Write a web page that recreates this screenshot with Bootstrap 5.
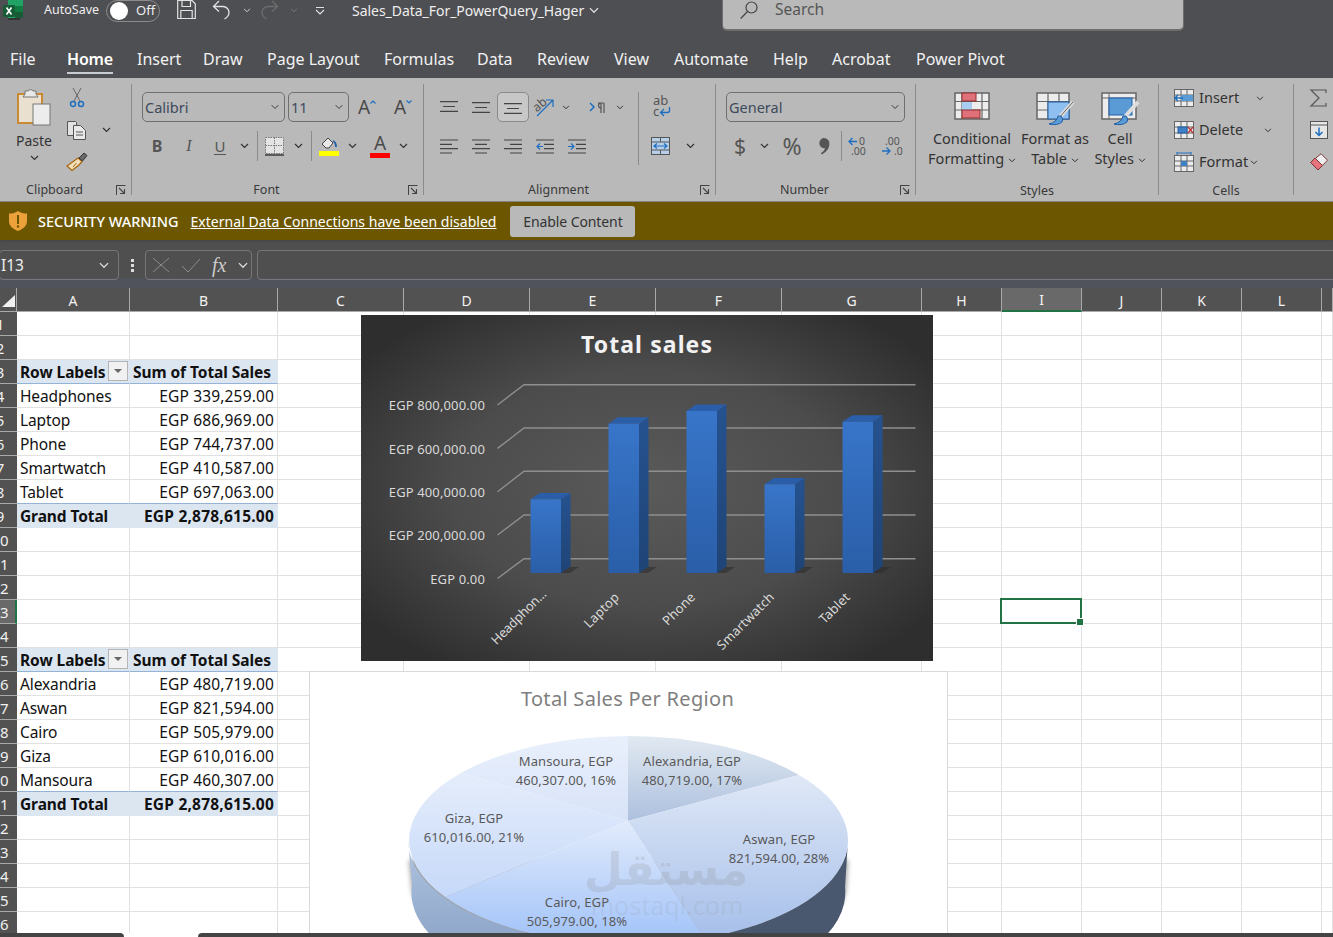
<!DOCTYPE html>
<html lang="en">
<head>
<meta charset="utf-8">
<title>Sales_Data_For_PowerQuery_Hager - Excel</title>
<link href="https://cdn.jsdelivr.net/npm/bootstrap@5.3.0/dist/css/bootstrap.min.css" rel="stylesheet">
<style>
html,body{margin:0;height:937px;overflow:hidden;background:#fff}
body{font-family:"Noto Sans","Open Sans","Liberation Sans",sans-serif;color:#333}
svg{display:block;flex-shrink:0;overflow:visible}
.app{width:1333px;height:937px;overflow:hidden}
.titlebar{height:46px;background:#4e4f53;color:#eee}
.logo{margin-left:3px;width:20px;height:21px;align-self:flex-start}
.autosave{font-size:12.5px;margin-left:21px;width:62px;margin-bottom:25px}
.toggle{width:54px;height:22px;border:1px solid #8b8b8b;border-radius:11px;font-size:13px;padding-left:3px;gap:8px;margin-bottom:25px}
.knob{width:18px;height:18px;border-radius:50%;background:#fff}
.qat{height:21px;margin-bottom:25px}
.q1{margin-left:17px;width:35px}.q2{width:31px}.q3{width:17px}.q4{width:30px}.q5{width:25px}.q6{width:26px}.q7{width:11px}
.doc{font-size:14px;width:237px;white-space:nowrap;margin-bottom:25px;letter-spacing:-.04px}
.searchbox{margin-left:134px;width:460px;height:30px;margin-top:-1px;padding-bottom:8px;align-self:flex-start;background:#b9b9b9;border-radius:0 0 4px 4px;box-shadow:0 1px 0 1px #6d6d6d;color:#555;font-size:15.5px;padding-left:17px;gap:17px}
.tabs{height:32px;background:#4e4f53;flex-wrap:nowrap}
.tabs .nav-link{color:#f2f2f2;font-size:16px;padding:0;line-height:26px;height:28px;white-space:nowrap;display:inline-block}
.tabs .nav-item{flex-shrink:0}
.tabs .nav-item:nth-child(1){margin-left:10px;width:57px}
.tabs .nav-item:nth-child(2){width:70px}
.tabs .nav-item:nth-child(3){width:66px}
.tabs .nav-item:nth-child(4){width:64px}
.tabs .nav-item:nth-child(5){width:117px}
.tabs .nav-item:nth-child(6){width:93px}
.tabs .nav-item:nth-child(7){width:60px}
.tabs .nav-item:nth-child(8){width:77px}
.tabs .nav-item:nth-child(9){width:60px}
.tabs .nav-item:nth-child(10){width:99px}
.tabs .nav-item:nth-child(11){width:59px}
.tabs .nav-item:nth-child(12){width:84px}
.tabs .active{font-weight:600;border-bottom:2px solid #c8cad4;color:#fff;letter-spacing:-.2px}
.ribbon{height:124px;background:#b9b9b9;padding-top:6px;border-bottom:1px solid #8a8a8a}
.g{height:111px;border-right:1px solid #8c8c8c;flex-shrink:0}
.g-clip{width:132px}.g-font{width:292px}.g-align{width:292px}.g-num{width:200px}.g-styles{width:243px}.g-cells{width:135px}.g-edit{width:39px;border:0}
.gb{height:97px;display:flow-root}
.gl{height:16px;font-size:12.5px;line-height:14px;color:#3a3a3a;padding-top:2px}
.gl2{padding-top:3px}
.launch{width:22px;padding:2px 5px 0 7px}
.s{display:flex;align-items:center;justify-content:center;flex-shrink:0;height:100%}
.rw{height:30px}
.r1{margin-top:8px}.r2{margin-top:9px}
.sep{width:1px;background:#8c8c8c;flex-shrink:0}
.sep-s{height:30px}
.w3{width:3px}.w4{width:4px}.w5{width:5px}.w6{width:6px}.w9{width:9px}.w10{width:10px}.w14{width:14px}.w15{width:15px}.w16{width:16px}.w18{width:18px}.w20{width:20px}.w28{width:28px}.w30{width:30px}.w32{width:32px}.w33{width:33px}.w36{width:36px}.w40{width:40px}.w42{width:42px}.w45{width:45px}.w46{width:46px}.w68{width:68px}
.form-select.fs{height:30px;min-height:30px;padding:0 16px 0 2px;font-size:14.5px;line-height:28px;color:#3d4a5c;background-color:transparent;border:1px solid #6f6f6f;border-radius:5px;background-position:right 4px center;background-size:10px 8px;flex-shrink:0;box-shadow:none}
.f-font{width:143px;margin-left:10px}.f-size{width:61px;margin-left:3px}.f-num{width:179px;margin-left:10px}
.gA{font-size:19px;color:#4a4a4a;line-height:1}
.gB{font-size:16px;color:#555;font-weight:700}
.gI{font-size:16px;color:#555;font-style:italic;font-family:"Liberation Serif",serif}
.gU{font-size:15px;color:#555;border-bottom:1.5px solid #555;line-height:16px;padding:0 1px}
.gC{font-size:21px;color:#555;line-height:1}
.gP{font-size:23px;color:#555;line-height:1}
.sel-btn{border:1px solid #8a8a8a;border-radius:5px;background:#c7c7c7;height:30px}
.paste{font-size:14px;line-height:20px;margin-top:5px}
.paste-col{height:97px;padding-top:4px}
.crow{height:28px;margin-bottom:4px}
.big{font-size:14.5px;line-height:20px;text-align:center;white-space:nowrap}
.bigcol{padding-top:8px}
.bigicon{height:36px}
.c-1{width:96px}.c-2{width:70px}.c-3{width:60px}
.lead8{margin-left:8px}
.cellrow{font-size:14.5px;padding-left:15px}
.cw25{width:25px}.cw56{width:56px}.cw64{width:64px}.cw50{width:50px}
.editrow{padding-left:16px}
.warn{height:38px;background:#6c5700;color:#fff;font-size:14px;padding-left:9px;box-shadow:0 1px 2px #444;position:relative}
.warn b{font-weight:500;margin-left:11px;font-size:14.5px;letter-spacing:0;padding-top:1px}
.warn a{color:#fff;margin-left:12px;letter-spacing:.02px}
.warn .btn{margin-left:14px;background:#b9b9b9;color:#333;border:0;border-radius:3px;font-size:14px;height:31px;width:125px;padding:0;letter-spacing:-.1px}
.fbar{height:48px;background:#4f4f4f;padding-top:10px;align-items:flex-start;background-image:linear-gradient(#4f4f4f 38px,#50535c 38px)}
.namebox{width:120px;height:30px;margin-left:-1px;border:1px solid #777;border-radius:4px;color:#eee;font-size:15.5px;padding:1px 0 0 1px;flex-shrink:0}
.dots{width:26px;height:30px;color:#ddd;flex-shrink:0}
.fxbox{width:107px;height:30px;border:1px solid #777;border-radius:4px;flex-shrink:0;color:#8b8b8b}
.fx{font-family:"Liberation Serif",serif;font-style:italic;font-size:20px;color:#ccc;line-height:1;width:19px}
.ml6{margin-left:6px}.ml11{margin-left:11px}
.finput{width:1090px;height:30px;border:1px solid #777;border-radius:4px;margin-left:5px;flex-shrink:0}
.sheetwrap{height:645px;overflow:hidden;position:relative}
table.sheet{table-layout:fixed;width:1333px;border-collapse:separate;border-spacing:0;margin:0;color:#111}
.sheet col.h{width:17px}.sheet col.a{width:113px}.sheet col.b{width:148px}.sheet col.c{width:126px}.sheet col.g7{width:140px}.sheet col.n{width:80px}.sheet col.m{width:11px}
.sheet thead th{height:24px;background:#525252;color:#f2f2f2;font-weight:400;font-size:14px;text-align:center;padding:2px 0 0;border-right:1px solid #a9a9a9;border-bottom:1px solid #a9a9a9;line-height:21px}
.sheet thead th.on{background:#696969;border-bottom:2px solid #217346;line-height:20px}
.sheet thead th.cor{position:relative;padding:0}
.sheet tbody th{height:24px;background:#525252;color:#f0f0f0;font-weight:400;font-size:15px;padding:2px 0 0;overflow:hidden;border-bottom:1px solid #a9a9a9;line-height:21px}
.sheet tbody th span{display:block;width:34px;margin-left:-17px;text-align:center}
.sheet tbody th.on{background:#696969;border-right:2px solid #217346}
.sheet td{height:24px;padding:2px 3px 0;border-right:1px solid #e1e1e1;border-bottom:1px solid #e1e1e1;font-size:15.5px;line-height:21px;white-space:nowrap;overflow:hidden;letter-spacing:-.12px}
.sheet td.v{text-align:right;letter-spacing:.15px}
.sheet td.hd{background:#dce6f1;font-weight:700;border-color:#dce6f1;border-bottom-color:#95b3d7;letter-spacing:-.07px}
.sheet td.tot{background:#dce6f1;font-weight:700;border-color:#dce6f1;letter-spacing:-.1px}
.sheet td.tot.v{letter-spacing:.22px}
.sheet tr.pre td.lb{border-bottom-color:#95b3d7}
.sheet td.hd.a1{position:relative;overflow:visible}
.filter{width:20px;height:20px;border:1px solid #b5b5b5;background:#f1f1f1;position:absolute;right:1px;top:1px;display:flex;align-items:center;justify-content:center}
.sheet td.cur{position:relative;overflow:visible}
.selbox{position:absolute;top:-2px;left:-2px;right:-1px;bottom:-1px;border:2px solid #217346;z-index:1}
.selbox i{position:absolute;right:-4px;bottom:-4px;width:6px;height:6px;background:#217346;border:1px solid #fff;box-sizing:content-box}
.chart{position:absolute;z-index:2}
.chart1{left:361px;top:27px;width:572px;height:346px;background:radial-gradient(ellipse 62% 62% at 50% 50%,#5a5a5a 0%,#4c4c4c 55%,#2e2e2e 100%)}
.chart2{left:310px;top:384px;width:637px;height:262px;background:#fff;box-shadow:0 0 0 1px #d9d9d9}
.chart text{font-family:"Noto Sans","Open Sans",sans-serif}
.t1{font-size:23px;font-weight:700;fill:#f2f2f2;letter-spacing:1.1px}
.ax{font-size:13px;fill:#d9d9d9;letter-spacing:.13px}
.ax .hp{letter-spacing:-.3px}
.t2{font-size:20px;fill:#7f7f7f;letter-spacing:.3px}
.pl{font-size:13px;fill:#595959;letter-spacing:.1px}
.bottom{height:4px;background:#fff}
.bot1{width:124px;height:4px;background:#444;border-radius:0 4px 0 0}
.bot2{width:1135px;height:4px;margin-left:74px;background:#444;border-radius:4px 0 0 0}
</style>
</head>
<body>
<svg width="0" height="0" class="position-absolute">
  <symbol id="ch" viewBox="0 0 9 6"><path d="M1 1l3.5 3.5L8 1" fill="none" stroke="#333" stroke-width="1.2"/></symbol>
  <symbol id="chw" viewBox="0 0 9 6"><path d="M1 1l3.5 3.5L8 1" fill="none" stroke="#ddd" stroke-width="1.1"/></symbol>
  <symbol id="la" viewBox="0 0 10 10"><path d="M0 .5h9.5M.5 0v10M.5 .5" stroke="#444" fill="none"/><path d="M3 3l5.5 5.5M4 8.5h4.5V4" stroke="#444" fill="none" stroke-width="1.1"/></symbol>
</svg>
<div class="app">
  <div class="titlebar d-flex align-items-center">
    <svg class="logo" viewBox="0 0 20 21"><rect x="5" y="0" width="15" height="18" fill="#21a366"/><rect x="12" y="6" width="8" height="6" fill="#107c41"/><rect x="12" y="12" width="8" height="6" fill="#185c37"/><rect x="0" y="5" width="12" height="12" rx="1" fill="#185c37"/><path d="M3.5 7.5l5 7M8.5 7.5l-5 7" stroke="#fff" stroke-width="1.6"/><rect x="5" y="18" width="12" height="2" fill="#333"/></svg>
    <div class="autosave">AutoSave</div>
    <div class="toggle d-flex align-items-center"><span class="knob"></span><span>Off</span></div>
    <div class="qat q1 d-flex"><svg width="19" height="19" viewBox="0 0 19 19"><path d="M.7.5v18h17.6V3.8L15 .5zM5 .5v6h8.500v-6M3.800 18.500v-8h11.400v8" fill="none" stroke="#e2e2e2" stroke-width="1.2"/></svg></div>
    <div class="qat q2 d-flex"><svg width="19" height="20" viewBox="0 0 19 20"><path d="M7 1L1.5 6.5 7 11.5M1.5 6.5H11a6 6 0 0 1 6 6c0 3-2 5-4.500 6.500" fill="none" stroke="#e2e2e2" stroke-width="1.3"/></svg></div>
    <div class="qat q3 d-flex align-items-center"><svg width="8" height="5"><use href="#chw"/></svg></div>
    <div class="qat q4 d-flex"><svg width="19" height="20" viewBox="0 0 19 20"><path d="M12 1l5.500 5.500L12 11.500M17.500 6.500H8a6 6 0 0 0-6 6c0 3 2 5 4.500 6.500" fill="none" stroke="#6d6d6d" stroke-width="1.3"/></svg></div>
    <div class="qat q5 d-flex align-items-center"><svg width="8" height="5" opacity=".35"><use href="#chw"/></svg></div>
    <div class="qat q6 d-flex align-items-center"><svg width="10" height="8" viewBox="0 0 10 8"><path d="M1 .5h8M1 3l4 4 4-4" fill="none" stroke="#e2e2e2" stroke-width="1.1"/></svg></div>
    <div class="qat q7"></div>
    <div class="doc d-flex align-items-center gap-1">Sales_Data_For_PowerQuery_Hager<svg width="12" height="7" viewBox="0 0 9 6"><use href="#chw"/></svg></div>
    <div class="searchbox d-flex align-items-center"><svg width="18" height="18" viewBox="0 0 18 18"><circle cx="11.500" cy="6.500" r="5.500" fill="none" stroke="#444" stroke-width="1.200"/><path d="M7.500 10.500L.7 17.500" stroke="#444" stroke-width="1.200"/></svg><span>Search</span></div>
  </div>
  <ul class="nav tabs">
    <li class="nav-item"><a class="nav-link" href="#">File</a></li>
    <li class="nav-item"><a class="nav-link active" href="#">Home</a></li>
    <li class="nav-item"><a class="nav-link" href="#">Insert</a></li>
    <li class="nav-item"><a class="nav-link" href="#">Draw</a></li>
    <li class="nav-item"><a class="nav-link" href="#">Page Layout</a></li>
    <li class="nav-item"><a class="nav-link" href="#">Formulas</a></li>
    <li class="nav-item"><a class="nav-link" href="#">Data</a></li>
    <li class="nav-item"><a class="nav-link" href="#">Review</a></li>
    <li class="nav-item"><a class="nav-link" href="#">View</a></li>
    <li class="nav-item"><a class="nav-link" href="#">Automate</a></li>
    <li class="nav-item"><a class="nav-link" href="#">Help</a></li>
    <li class="nav-item"><a class="nav-link" href="#">Acrobat</a></li>
    <li class="nav-item"><a class="nav-link" href="#">Power Pivot</a></li>
  </ul>

  <div class="ribbon d-flex">
    <!-- Clipboard -->
    <div class="g g-clip">
      <div class="gb d-flex">
        <div class="paste-col w68 d-flex flex-column align-items-center">
          <svg width="34" height="38" viewBox="0 0 34 38"><rect x="1" y="6" width="24" height="29" fill="#e9e0cf" stroke="#c98a35" stroke-width="2"/><path d="M8 6V3h3a3 3 0 0 1 5 0h3v3l2 3H6z" fill="#e8e8e8" stroke="#777"/><rect x="16" y="16" width="17" height="21" fill="#ececec" stroke="#777"/></svg>
          <div class="paste">Paste</div>
          <svg width="9" height="6" class="mt-1"><use href="#ch"/></svg>
        </div>
        <div>
          <div class="crow d-flex align-items-center"><div class="s w18"><svg width="14" height="20" viewBox="0 0 14 20"><path d="M3 0l7 13M11 0L4 13" stroke="#666" fill="none"/><circle cx="3" cy="16" r="2.500" fill="none" stroke="#1e6fc0" stroke-width="1.500"/><circle cx="11" cy="16" r="2.500" fill="none" stroke="#1e6fc0" stroke-width="1.500"/></svg></div></div>
          <div class="crow d-flex align-items-center"><div class="s w18"><svg width="20" height="19" viewBox="0 0 20 19"><path d="M.5.5h8l1 1v13H.5z" fill="#e3e3e3" stroke="#555"/><path d="M6.500 4.500h7l5 5v9h-12z" fill="#e9e9e9" stroke="#555"/><path d="M9 11h7M9 14h7" stroke="#555"/></svg></div><div class="s w40"><svg width="9" height="6"><use href="#ch"/></svg></div></div>
          <div class="crow d-flex align-items-center"><div class="s w18"><svg width="20" height="18" viewBox="0 0 20 18"><path d="M11 5l4 3.500-2.500 3L5 17.500l-5-4.500z" fill="#f0dfb8" stroke="#a8650f" stroke-width="1.200"/><path d="M6 14l3.500-4" stroke="#a8650f"/><path d="M12 5l5-5 3 2.500-4.500 5.500z" fill="#6a6a6a" stroke="#333"/></svg></div></div>
        </div>
      </div>
      <div class="gl d-flex"><div class="flex-grow-1 text-center">Clipboard</div><div class="launch"><svg width="10" height="10"><use href="#la"/></svg></div></div>
    </div>
    <!-- Font -->
    <div class="g g-font">
      <div class="gb">
        <div class="rw r1 d-flex align-items-center">
          <select class="form-select fs f-font" aria-label="Font"><option>Calibri</option></select>
          <select class="form-select fs f-size" aria-label="Size"><option>11</option></select>
          <div class="s w20 ms-2 gA">A<svg width="6" height="4" viewBox="0 0 6 4" class="align-self-start mt-2"><path d="M.5 3.500L3 1l2.500 2.500" fill="none" stroke="#1e6fc0" stroke-width="1.200"/></svg></div>
          <div class="s w20 ms-3 gA">A<svg width="6" height="4" viewBox="0 0 6 4" class="align-self-start mt-2"><path d="M.5 .5L3 3l2.500-2.500" fill="none" stroke="#1e6fc0" stroke-width="1.200"/></svg></div>
        </div>
        <div class="rw r2 d-flex align-items-center">
          <div class="s w9"></div>
          <div class="s w32 gB">B</div><div class="s w32 gI">I</div><div class="s w30"><span class="gU">U</span></div>
          <div class="s w18"><svg width="9" height="6"><use href="#ch"/></svg></div><div class="s w4"></div><div class="sep sep-s"></div>
          <div class="s w32"><svg width="19" height="19" viewBox="0 0 19 19"><rect x=".5" y=".5" width="18" height="16" fill="#e4e4e4" stroke="#777" stroke-dasharray="1.500 1"/><path d="M9.500 .5v16M.5 8.500h18" stroke="#777" stroke-dasharray="1.500 1"/><path d="M0 18h19" stroke="#444" stroke-width="1.600"/></svg></div>
          <div class="s w16"><svg width="9" height="6"><use href="#ch"/></svg></div><div class="s w5"></div><div class="sep sep-s"></div>
          <div class="s w33"><svg width="20" height="20" viewBox="0 0 20 20"><path d="M3 8l6-6 5 5-4 5H7z" fill="#e8e8e8" stroke="#444"/><path d="M14 5q3 1 3 6" stroke="#1e5ea8" stroke-width="1.800" fill="none"/><rect x="0" y="15" width="20" height="5" fill="#ff0"/></svg></div>
          <div class="s w14"><svg width="9" height="6"><use href="#ch"/></svg></div>
          <div class="s w42"><div class="d-flex flex-column align-items-center"><span class="gA">A</span><svg width="20" height="5"><rect width="20" height="5" fill="#f00"/></svg></div></div>
          <div class="s w4"><svg width="9" height="6"><use href="#ch"/></svg></div>
        </div>
      </div>
      <div class="gl d-flex"><div class="flex-grow-1 text-center">Font</div><div class="launch"><svg width="10" height="10"><use href="#la"/></svg></div></div>
    </div>
    <!-- Alignment -->
    <div class="g g-align">
      <div class="gb d-flex">
        <div class="d-flex flex-column">
          <div class="rw r1 d-flex">
            <div class="s w9"></div>
            <div class="s w32"><svg width="18" height="13" viewBox="0 0 18 13"><path d="M0 .7h18M3 5.500h12M0 10.300h18" stroke="#444" stroke-width="1.200"/></svg></div>
            <div class="s w32"><svg width="18" height="13" viewBox="0 0 18 13"><path d="M0 1.700h18M3 6.500h12M0 11.300h18" stroke="#444" stroke-width="1.200"/></svg></div>
            <div class="s w32 sel-btn"><svg width="18" height="13" viewBox="0 0 18 13"><path d="M0 2.700h18M3 7.500h12M0 12.300h18" stroke="#444" stroke-width="1.200"/></svg></div>
            <div class="s w32"><svg width="20" height="18" viewBox="0 0 20 18"><path d="M2 18L18 2M11 2h7v7" fill="none" stroke="#1e6fc0" stroke-width="1.200"/><text x="-1" y="11" font-size="12.500" fill="#555" transform="rotate(-40 5 9)">ab</text></svg></div>
            <div class="s w10"><svg width="8" height="5" viewBox="0 0 9 6"><use href="#ch"/></svg></div>
            <div class="s w6"></div>
            <div class="s w40"><svg width="16" height="11" viewBox="0 0 16 11"><path d="M1 1l4 4-4 4" fill="none" stroke="#1e6fc0" stroke-width="1.500"/><path d="M12 1v10M15 1v10M9 1h6M12 1a2.500 2.500 0 0 0 0 5" fill="none" stroke="#555" stroke-width="1.200"/></svg></div>
            <div class="s w6"><svg width="8" height="5" viewBox="0 0 9 6"><use href="#ch"/></svg></div>
            <div class="s w15"></div>
          </div>
          <div class="rw r2 d-flex">
            <div class="s w9"></div>
            <div class="s w32"><svg width="18" height="15" viewBox="0 0 18 15"><path d="M0 1h18M0 5.300h12M0 9.600h18M0 14h12" stroke="#444" stroke-width="1.200"/></svg></div>
            <div class="s w32"><svg width="18" height="15" viewBox="0 0 18 15"><path d="M0 1h18M3 5.300h12M0 9.600h18M3 14h12" stroke="#444" stroke-width="1.200"/></svg></div>
            <div class="s w32"><svg width="18" height="15" viewBox="0 0 18 15"><path d="M0 1h18M6 5.300h12M0 9.600h18M6 14h12" stroke="#444" stroke-width="1.200"/></svg></div>
            <div class="s w32"><svg width="18" height="15" viewBox="0 0 18 15"><path d="M0 1h18M8 5.300h10M8 9.600h10M0 14h18" stroke="#444" stroke-width="1.200"/><path d="M7 7.500H1M4 4.500L1 7.500l3 3" fill="none" stroke="#1e6fc0" stroke-width="1.200"/></svg></div>
            <div class="s w32"><svg width="18" height="15" viewBox="0 0 18 15"><path d="M0 1h18M8 5.300h10M8 9.600h10M0 14h18" stroke="#444" stroke-width="1.200"/><path d="M0 7.500h6M3 4.500l3 3-3 3" fill="none" stroke="#1e6fc0" stroke-width="1.200"/></svg></div>
            <div class="s w45"></div>
          </div>
        </div>
        <div class="sep mb-3 mt-2"></div>
        <div class="d-flex flex-column">
          <div class="rw r1 d-flex"><div class="s w46"><svg width="18" height="24" viewBox="0 0 18 24"><text x="0" y="10" font-size="13" fill="#555">ab</text><text x="0" y="21" font-size="13" fill="#555">c</text><path d="M16.500 12v3.500a2 2 0 0 1-2 2H8M11 14l-3.500 3.500L11 21" fill="none" stroke="#1e6fc0" stroke-width="1.300"/></svg></div></div>
          <div class="rw r2 d-flex"><div class="s w42"><svg width="19" height="18" viewBox="0 0 19 18"><rect x=".5" y=".5" width="18" height="17" fill="#b7cfe8" stroke="#555"/><path d="M.5 5h18M.5 13h18M9.500 .5V5M9.500 13v5" stroke="#555"/><path d="M3 9h13M6 6.500L3 9l3 2.500M13 6.500L16 9l-3 2.500" fill="none" stroke="#1e6fc0" stroke-width="1.200"/></svg></div><div class="s w18"><svg width="9" height="6"><use href="#ch"/></svg></div></div>
        </div>
      </div>
      <div class="gl d-flex"><div class="flex-grow-1 text-center">Alignment</div><div class="launch"><svg width="10" height="10"><use href="#la"/></svg></div></div>
    </div>
    <!-- Number -->
    <div class="g g-num">
      <div class="gb">
        <div class="rw r1 d-flex"><select class="form-select fs f-num" aria-label="Number format"><option>General</option></select></div>
        <div class="rw r2 d-flex align-items-center">
          <div class="s w10"></div>
          <div class="s w28 gC">$</div>
          <div class="s w20"><svg width="9" height="6"><use href="#ch"/></svg></div>
          <div class="s w36 gP">%</div>
          <div class="s w28"><svg width="11" height="17" viewBox="0 0 9 14"><path d="M4 0a4.500 4.500 0 0 1 4.500 5c0 4-3 7-6 8.500l-1-1c2-1 3-2.500 3.500-4A4 4 0 0 1 4 0z" fill="#555"/></svg></div>
          <div class="w3"></div><div class="sep sep-s"></div>
          <div class="s w32"><svg width="20" height="20" viewBox="0 0 20 20"><path d="M9 5.500H1M4.500 2L1 5.500 4.500 9" fill="none" stroke="#1e6fc0" stroke-width="1.300"/><text x="11" y="9" font-size="10.500" fill="#555">0</text><text x="3" y="19" font-size="10.500" fill="#555">.00</text></svg></div>
          <div class="s w36"><svg width="20" height="20" viewBox="0 0 20 20"><text x="3" y="9" font-size="10.500" fill="#555">.00</text><path d="M0 15h8M4.500 11.500L8 15l-3.500 3.500" fill="none" stroke="#1e6fc0" stroke-width="1.300"/><text x="12" y="19" font-size="10.500" fill="#555">.0</text></svg></div>
        </div>
      </div>
      <div class="gl d-flex"><div class="flex-grow-1 text-center">Number</div><div class="launch"><svg width="10" height="10"><use href="#la"/></svg></div></div>
    </div>
    <!-- Styles -->
    <div class="g g-styles">
      <div class="gb d-flex">
        <div class="lead8"></div>
        <div class="c-1 bigcol d-flex flex-column align-items-center">
          <div class="bigicon"><svg width="36" height="28" viewBox="0 0 36 28"><rect x="1" y="1" width="34" height="26" fill="#ededed" stroke="#666" stroke-width="1.500"/><path d="M1 9.500h34M1 18h34M8 1v26M28 1v26" stroke="#666" stroke-width="1.200"/><rect x="8" y="1" width="14" height="8" fill="#e0707a" stroke="#8e2f2f"/><rect x="8" y="10" width="10" height="8" fill="#a7cdf0"/><rect x="8" y="18" width="18" height="8" fill="#e0707a" stroke="#8e2f2f"/></svg></div>
          <div class="big">Conditional<br>Formatting <svg width="8" height="5" class="d-inline align-middle"><use href="#ch"/></svg></div>
        </div>
        <div class="c-2 bigcol d-flex flex-column align-items-center">
          <div class="bigicon"><svg width="38" height="34" viewBox="0 0 38 34"><rect x="1" y="1" width="32" height="26" fill="#ececec" stroke="#666" stroke-width="1.500"/><path d="M1 9.500h32M1 18h32M12 1v26M23 1v26" stroke="#666" stroke-width="1.200"/><rect x="12" y="10" width="21" height="17" fill="#8ebff0" stroke="#1e5ea8"/><path d="M37 10L22 27" stroke="#ddd" stroke-width="4"/><path d="M37 10L22 27" stroke="#666" stroke-width="1" fill="none"/><path d="M22 24q-1 6-9 8 8 2 13-2 2-3-1-6z" fill="#5b9bd5" stroke="#1e5ea8"/></svg></div>
          <div class="big">Format as<br>Table <svg width="8" height="5" class="d-inline align-middle"><use href="#ch"/></svg></div>
        </div>
        <div class="c-3 bigcol d-flex flex-column align-items-center">
          <div class="bigicon"><svg width="38" height="34" viewBox="0 0 38 34"><rect x="1" y="1" width="34" height="26" fill="#ececec" stroke="#666" stroke-width="1.500"/><path d="M1 6h34M8 1v26" stroke="#666"/><rect x="8" y="6" width="23" height="17" fill="#5b9bd5" stroke="#1e5ea8"/><path d="M37 10L22 27" stroke="#ddd" stroke-width="4"/><path d="M22 24q-1 6-9 8 8 2 13-2 2-3-1-6z" fill="#5b9bd5" stroke="#1e5ea8"/></svg></div>
          <div class="big">Cell<br>Styles <svg width="8" height="5" class="d-inline align-middle"><use href="#ch"/></svg></div>
        </div>
      </div>
      <div class="gl gl2 text-center">Styles</div>
    </div>
    <!-- Cells -->
    <div class="g g-cells">
      <div class="gb">
        <div class="crow cellrow d-flex align-items-center"><div class="cw25"><svg width="20" height="18" viewBox="0 0 20 18"><rect x=".5" y=".5" width="19" height="17" fill="#ececec" stroke="#666"/><path d="M7 .5v17M13 .5v17M.5 6h19M.5 12h19" stroke="#666"/><rect x="7" y="6" width="12" height="6" fill="#5b9bd5"/><path d="M9 9H1M4 6L1 9l3 3" fill="none" stroke="#1e6fc0" stroke-width="1.500"/></svg></div><div class="cw56">Insert</div><div class="s w10"><svg width="8" height="5"><use href="#ch"/></svg></div></div>
        <div class="crow cellrow d-flex align-items-center"><div class="cw25"><svg width="20" height="18" viewBox="0 0 20 18"><rect x=".5" y=".5" width="19" height="17" fill="#ececec" stroke="#666"/><path d="M7 .5v17M13 .5v17M.5 6h19M.5 12h19" stroke="#666"/><rect x="4" y="6" width="9" height="6" fill="#3f7fc4" stroke="#1e5ea8"/><path d="M14 6l5 6M19 6l-5 6" stroke="#b33" stroke-width="1.300"/></svg></div><div class="cw64">Delete</div><div class="s w10"><svg width="8" height="5"><use href="#ch"/></svg></div></div>
        <div class="crow cellrow d-flex align-items-center"><div class="cw25"><svg width="20" height="20" viewBox="0 0 20 20"><rect x=".5" y="3.500" width="19" height="16" fill="#ececec" stroke="#666"/><path d="M7 3.500v16M13 3.500v16M.5 9h19M.5 14h19" stroke="#666"/><rect x="7" y="9" width="6" height="5" fill="#3f7fc4"/><path d="M3 1h14M3 0v3M17 0v3" stroke="#1e6fc0"/></svg></div><div class="cw50">Format</div><div class="s w10"><svg width="8" height="5"><use href="#ch"/></svg></div></div>
      </div>
      <div class="gl gl2 text-center">Cells</div>
    </div>
    <!-- Editing -->
    <div class="g g-edit">
      <div class="gb">
        <div class="crow editrow d-flex align-items-center"><svg width="18" height="18" viewBox="0 0 18 18"><path d="M16 4V1H1l8 8-8 8h15v-3" fill="none" stroke="#555" stroke-width="1.200"/></svg></div>
        <div class="crow editrow d-flex align-items-center"><svg width="18" height="18" viewBox="0 0 18 18"><rect x=".5" y=".5" width="17" height="17" fill="#e6e6e6" stroke="#555"/><path d="M.5 4h17" stroke="#555"/><path d="M9 6.500v8M5.500 11L9 14.500l3.500-3.500" fill="none" stroke="#1e6fc0" stroke-width="1.500"/></svg></div>
        <div class="crow editrow d-flex align-items-center"><svg width="18" height="18" viewBox="0 0 18 18"><path d="M11 .7l6.500 6.500L8 17 .7 9.500z" fill="#eee" stroke="#7a3a3a"/><path d="M5 5l7.500 7.500L8 17 .7 9.500z" fill="#e8737f" stroke="#7a3a3a"/></svg></div>
      </div>
    </div>
  </div>

  <div class="warn d-flex align-items-center">
    <svg width="18" height="20" viewBox="0 0 18 20"><path d="M9 0c3 2 5 2.500 9 2.500V10c0 5-4 8-9 10-5-2-9-5-9-10V2.500C4 2.500 6 2 9 0z" fill="#eda13b"/><path d="M9 4v9" stroke="#6c5700" stroke-width="2"/><circle cx="9" cy="15.500" r="1.200" fill="#6c5700"/></svg>
    <b>SECURITY WARNING</b>
    <a href="#">External Data Connections have been disabled</a>
    <button type="button" class="btn">Enable Content</button>
  </div>

  <div class="fbar d-flex">
    <div class="namebox d-flex align-items-center justify-content-between"><span>I13</span><svg width="12" height="7" class="me-2" viewBox="0 0 9 6"><use href="#chw"/></svg></div>
    <div class="dots d-flex align-items-center justify-content-center"><svg width="3" height="13" viewBox="0 0 3 13"><rect width="3" height="3" fill="#ddd"/><rect y="5" width="3" height="3" fill="#ddd"/><rect y="10" width="3" height="3" fill="#ddd"/></svg></div>
    <div class="fxbox d-flex align-items-center">
      <svg width="18" height="16" viewBox="0 0 18 16" class="ml6"><path d="M1 1l16 14M17 1L1 15" stroke="#8b8b8b" fill="none"/></svg>
      <svg width="20" height="15" viewBox="0 0 20 15" class="ml11"><path d="M1 8l6 6L19 1" stroke="#8b8b8b" fill="none"/></svg>
      <span class="fx ml11">fx</span>
      <svg width="12" height="7" class="ml6" viewBox="0 0 9 6"><use href="#chw"/></svg>
    </div>
    <div class="finput"></div>
  </div>

  <div class="sheetwrap">
    <table class="sheet">
      <colgroup><col class="h"><col class="a"><col class="b"><col class="c"><col class="c"><col class="c"><col class="c"><col class="g7"><col class="n"><col class="n"><col class="n"><col class="n"><col class="n"><col class="m"></colgroup>
      <thead><tr><th class="cor"><svg width="16" height="16" viewBox="0 0 16 16" class="ms-auto"><path d="M15 3v12H2z" fill="#f0f0f0"/></svg></th><th>A</th><th>B</th><th>C</th><th>D</th><th>E</th><th>F</th><th>G</th><th>H</th><th class="on">I</th><th>J</th><th>K</th><th>L</th><th></th></tr></thead>
      <tbody>
      <tr><th><span>1</span><td><td><td><td><td><td><td><td><td><td><td><td><td></tr>
      <tr class="pre"><th><span>2</span><td><td><td><td><td><td><td><td><td><td><td><td><td></tr>
      <tr><th><span>3</span><td class="hd a1">Row Labels<span class="filter"><svg width="8" height="4"><path d="M0 0h8L4 4z" fill="#666"/></svg></span></td><td class="hd">Sum of Total Sales</td><td><td><td><td><td><td><td><td><td><td><td></tr>
      <tr><th><span>4</span><td>Headphones</td><td class="v">EGP 339,259.00</td><td><td><td><td><td><td><td><td><td><td><td></tr>
      <tr><th><span>5</span><td>Laptop</td><td class="v">EGP 686,969.00</td><td><td><td><td><td><td><td><td><td><td><td></tr>
      <tr><th><span>6</span><td>Phone</td><td class="v">EGP 744,737.00</td><td><td><td><td><td><td><td><td><td><td><td></tr>
      <tr><th><span>7</span><td>Smartwatch</td><td class="v">EGP 410,587.00</td><td><td><td><td><td><td><td><td><td><td><td></tr>
      <tr class="pre"><th><span>8</span><td class="lb">Tablet</td><td class="v lb">EGP 697,063.00</td><td><td><td><td><td><td><td><td><td><td><td></tr>
      <tr><th><span>9</span><td class="tot">Grand Total</td><td class="tot v">EGP 2,878,615.00</td><td><td><td><td><td><td><td><td><td><td><td></tr>
      <tr><th><span>10</span><td><td><td><td><td><td><td><td><td><td><td><td><td></tr>
      <tr><th><span>11</span><td><td><td><td><td><td><td><td><td><td><td><td><td></tr>
      <tr><th><span>12</span><td><td><td><td><td><td><td><td><td><td><td><td><td></tr>
      <tr><th class="on"><span>13</span><td><td><td><td><td><td><td><td><td class="cur"><div class="selbox"><i></i></div></td><td><td><td><td></tr>
      <tr><th><span>14</span><td><td><td><td><td><td><td><td><td><td><td><td><td></tr>
      <tr><th><span>15</span><td class="hd a1">Row Labels<span class="filter"><svg width="8" height="4"><path d="M0 0h8L4 4z" fill="#666"/></svg></span></td><td class="hd">Sum of Total Sales</td><td><td><td><td><td><td><td><td><td><td><td></tr>
      <tr><th><span>16</span><td>Alexandria</td><td class="v">EGP 480,719.00</td><td><td><td><td><td><td><td><td><td><td><td></tr>
      <tr><th><span>17</span><td>Aswan</td><td class="v">EGP 821,594.00</td><td><td><td><td><td><td><td><td><td><td><td></tr>
      <tr><th><span>18</span><td>Cairo</td><td class="v">EGP 505,979.00</td><td><td><td><td><td><td><td><td><td><td><td></tr>
      <tr><th><span>19</span><td>Giza</td><td class="v">EGP 610,016.00</td><td><td><td><td><td><td><td><td><td><td><td></tr>
      <tr class="pre"><th><span>20</span><td class="lb">Mansoura</td><td class="v lb">EGP 460,307.00</td><td><td><td><td><td><td><td><td><td><td><td></tr>
      <tr><th><span>21</span><td class="tot">Grand Total</td><td class="tot v">EGP 2,878,615.00</td><td><td><td><td><td><td><td><td><td><td><td></tr>
      <tr><th><span>22</span><td><td><td><td><td><td><td><td><td><td><td><td><td></tr>
      <tr><th><span>23</span><td><td><td><td><td><td><td><td><td><td><td><td><td></tr>
      <tr><th><span>24</span><td><td><td><td><td><td><td><td><td><td><td><td><td></tr>
      <tr><th><span>25</span><td><td><td><td><td><td><td><td><td><td><td><td><td></tr>
      <tr><th><span>26</span><td><td><td><td><td><td><td><td><td><td><td><td><td></tr>
      </tbody>
    </table>

    <div class="chart chart1">
      <svg width="572" height="346" viewBox="361 315 572 346">
        <defs>
          <linearGradient id="bf" x1="0" y1="0" x2="0" y2="1"><stop offset="0" stop-color="#3875c9"/><stop offset="1" stop-color="#2a5ea8"/></linearGradient>
          <linearGradient id="bs" x1="0" y1="0" x2="0" y2="1"><stop offset="0" stop-color="#25528f"/><stop offset="1" stop-color="#1f4476"/></linearGradient>
        </defs>
        <g stroke="#8f8f8f" stroke-width="1.400" fill="none">
          <path d="M497.500 405L524 384.700H915.500"/><path d="M497.500 448.400L524 428H915.500"/><path d="M497.500 491.700L524 471.300H915.500"/><path d="M497.500 535L524 515H915.500"/><path d="M497.500 578.500L524 558.700H915.500"/>
        </g>
        <text class="t1" x="647" y="353" text-anchor="middle">Total sales</text>
        <g class="ax" text-anchor="end"><text x="485" y="410">EGP 800,000.00</text><text x="485" y="454">EGP 600,000.00</text><text x="485" y="497">EGP 400,000.00</text><text x="485" y="540">EGP 200,000.00</text><text x="485" y="584">EGP 0.00</text></g>
        <g fill="#2a2a2a" opacity=".55"><path d="M530 573l6-6h34l9 0-9 6z"/><path d="M608 573l6-6h34l9 0-9 6z"/><path d="M686 573l6-6h34l9 0-9 6z"/><path d="M764 573l6-6h34l9 0-9 6z"/><path d="M842 573l6-6h34l9 0-9 6z"/></g>
        <g>
          <path d="M561 499.300l9.500-6.400V566.500L561 573z" fill="url(#bs)"/><path d="M530.500 499.300l9.500-6.400h30.500L561 499.300z" fill="#2a5ea8"/><rect x="530.500" y="499.300" width="30.500" height="73.700" fill="url(#bf)"/>
          <path d="M639 423.700l9.500-6.400V566.500L639 573z" fill="url(#bs)"/><path d="M608.500 423.700l9.500-6.400h30.500L639 423.700z" fill="#2a5ea8"/><rect x="608.500" y="423.700" width="30.500" height="149.300" fill="url(#bf)"/>
          <path d="M717 411l9.500-6.400V566.500L717 573z" fill="url(#bs)"/><path d="M686.500 411l9.500-6.400h30.500L717 411z" fill="#2a5ea8"/><rect x="686.500" y="411" width="30.500" height="162" fill="url(#bf)"/>
          <path d="M795 484.300l9.500-6.400V566.500L795 573z" fill="url(#bs)"/><path d="M764.500 484.300l9.500-6.400h30.500L795 484.300z" fill="#2a5ea8"/><rect x="764.500" y="484.300" width="30.500" height="88.700" fill="url(#bf)"/>
          <path d="M873 421.700l9.500-6.400V566.500L873 573z" fill="url(#bs)"/><path d="M842.500 421.700l9.500-6.400h30.500L873 421.700z" fill="#2a5ea8"/><rect x="842.500" y="421.700" width="30.500" height="151.300" fill="url(#bf)"/>
        </g>
        <g class="ax" text-anchor="end">
          <text class="hp" transform="translate(547 595) rotate(-45)">Headphon...</text>
          <text transform="translate(620 598) rotate(-45)">Laptop</text>
          <text transform="translate(696 598) rotate(-45)">Phone</text>
          <text transform="translate(775 598) rotate(-45)">Smartwatch</text>
          <text transform="translate(851 598) rotate(-45)">Tablet</text>
        </g>
      </svg>
    </div>

    <div class="chart chart2">
      <svg width="637" height="261" viewBox="310 672 637 261">
        <defs>
          <linearGradient id="pa" gradientUnits="userSpaceOnUse" x1="0" y1="736" x2="0" y2="821"><stop offset="0" stop-color="#e1e9f1"/><stop offset="1" stop-color="#adc0de"/></linearGradient>
          <linearGradient id="pb" gradientUnits="userSpaceOnUse" x1="0" y1="775" x2="0" y2="938"><stop offset="0" stop-color="#dfe8f6"/><stop offset="1" stop-color="#a6bfea"/></linearGradient>
          <linearGradient id="pc" gradientUnits="userSpaceOnUse" x1="0" y1="821" x2="0" y2="938"><stop offset="0" stop-color="#e2ebfb"/><stop offset="1" stop-color="#a3c4f9"/></linearGradient>
          <linearGradient id="pd" gradientUnits="userSpaceOnUse" x1="0" y1="773" x2="0" y2="897"><stop offset="0" stop-color="#e5edfb"/><stop offset="1" stop-color="#c6d9f9"/></linearGradient>
          <linearGradient id="pe" gradientUnits="userSpaceOnUse" x1="0" y1="736" x2="0" y2="821"><stop offset="0" stop-color="#e9f0fc"/><stop offset="1" stop-color="#d8e3f8"/></linearGradient>
          <linearGradient id="sl" gradientUnits="userSpaceOnUse" x1="0" y1="860" x2="0" y2="990"><stop offset="0" stop-color="#a9bfdc"/><stop offset="1" stop-color="#7d96bd"/></linearGradient>
          <filter id="bl" x="-10%" y="-10%" width="120%" height="120%"><feGaussianBlur stdDeviation="2.500"/></filter>
        </defs>
        <text class="t2" x="627.500" y="706" text-anchor="middle">Total Sales Per Region</text>
        <path d="M409 860L412 890A218 104 0 0 0 846 890L848 860z" fill="#777" filter="url(#bl)" opacity=".7"/>
        <path d="M408 840L412 885A217 104 0 0 0 704 990V938A220 104 0 0 1 408 840z" fill="url(#sl)"/>
        <path d="M848 840L845 887A217 104 0 0 1 704 990V938A220 104 0 0 0 848 840z" fill="#4a586f"/>
        <path d="M628 821L628 736A220 104 0 0 1 799 775z" fill="url(#pa)"/>
        <path d="M628 821L799 775A220 104 0 0 1 704 938z" fill="url(#pb)"/>
        <path d="M628 821L704 938A220 104 0 0 1 445 897z" fill="url(#pc)"/>
        <path d="M628 821L445 897A220 104 0 0 1 461 773z" fill="url(#pd)"/>
        <path d="M628 821L461 773A220 104 0 0 1 628 736z" fill="url(#pe)"/>
        <g class="pl" text-anchor="middle">
          <text x="566" y="766">Mansoura, EGP</text><text x="566" y="785">460,307.00, 16%</text>
          <text x="692" y="766">Alexandria, EGP</text><text x="692" y="785">480,719.00, 17%</text>
          <text x="474" y="823">Giza, EGP</text><text x="474" y="842">610,016.00, 21%</text>
          <text x="779" y="844">Aswan, EGP</text><text x="779" y="863">821,594.00, 28%</text>
          <text x="577" y="907">Cairo, EGP</text><text x="577" y="926">505,979.00, 18%</text>
        </g>
        <text x="666" y="885" text-anchor="middle" font-size="45" font-weight="700" fill="#8a8a8a" opacity=".2" style="font-family:'DejaVu Sans',sans-serif">مستقل</text>
        <text x="667" y="915" text-anchor="middle" font-size="25" fill="#8a8a8a" opacity=".12">mostaql.com</text>
      </svg>
    </div>
  </div>
  <div class="bottom d-flex"><div class="bot1"></div><div class="bot2"></div></div>
</div>
<script src="https://cdn.jsdelivr.net/npm/bootstrap@5.3.0/dist/js/bootstrap.bundle.min.js"></script>
</body>
</html>
